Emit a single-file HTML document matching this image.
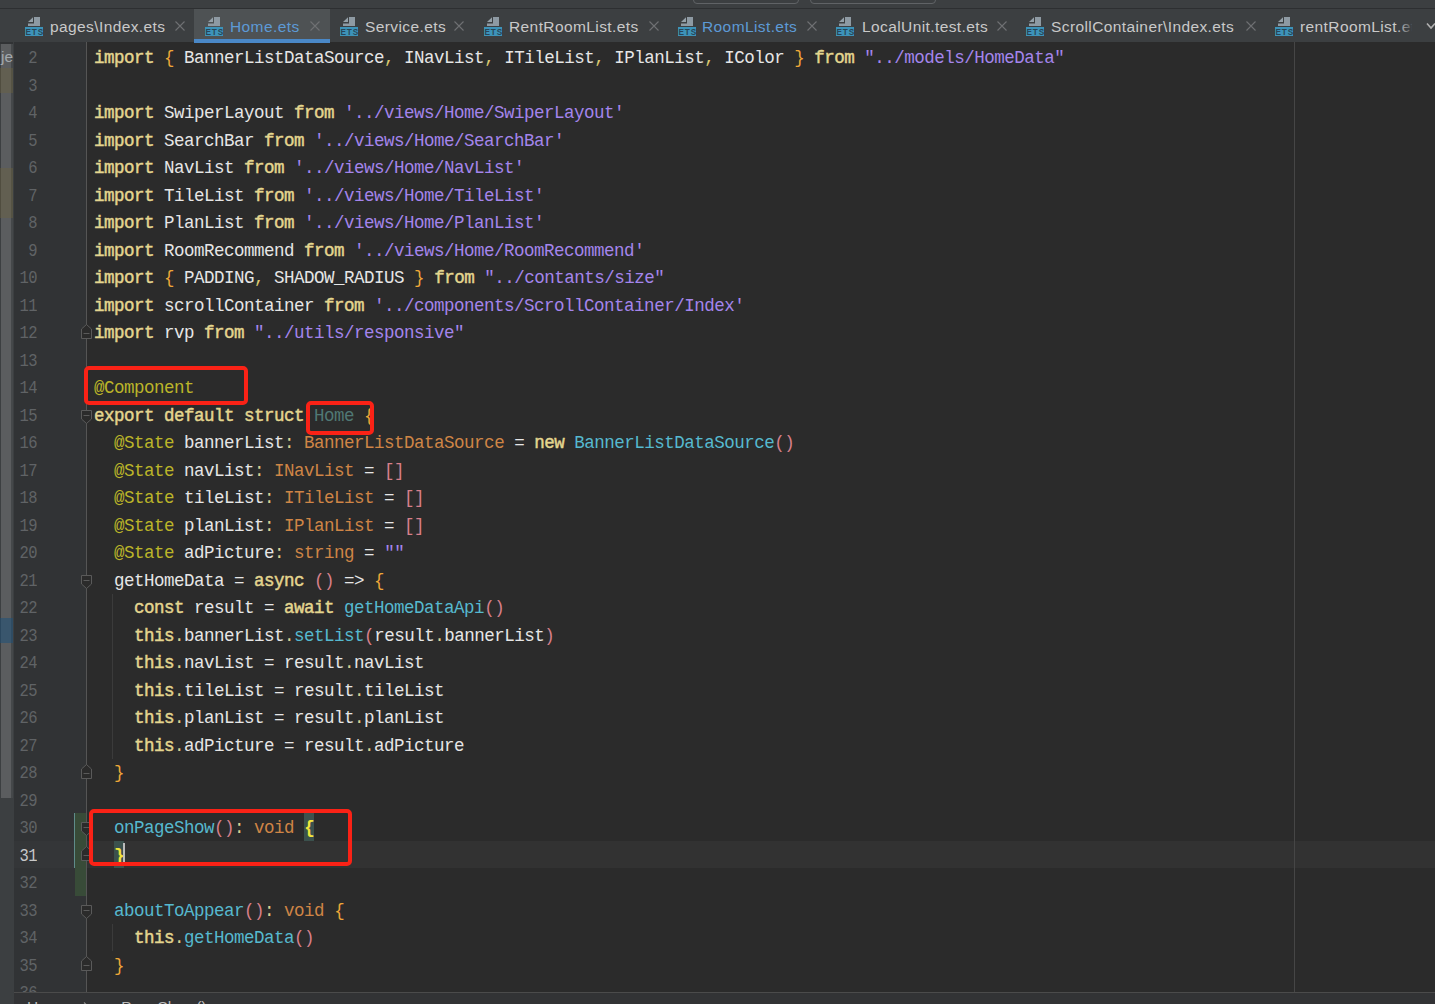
<!DOCTYPE html>
<html><head><meta charset="utf-8">
<style>
*{margin:0;padding:0;box-sizing:border-box}
html,body{width:1435px;height:1004px;overflow:hidden;background:#2b2b2b}
body{position:relative;font-family:"Liberation Sans",sans-serif}
#topbar{position:absolute;left:0;top:0;width:1435px;height:9px;background:#3c3f41;border-bottom:1px solid #2d2f31;overflow:hidden}
.tbtn{position:absolute;top:-10px;height:14px;border:1px solid #606366;border-radius:4px}
#tabs{position:absolute;left:0;top:9px;width:1435px;height:33px;background:#3c3f41}
#acttab{position:absolute;left:194px;top:9px;width:136px;height:33px;background:#4e5254}
#actline{position:absolute;left:194px;top:39px;width:136px;height:4px;z-index:2;background:#4a88c7}
.ico{position:absolute;top:17px}
.tt{position:absolute;top:16px;font-size:15.5px;letter-spacing:0.4px;line-height:22px;color:#c9c9c9;white-space:pre}
.tt.bl{color:#5d9ad6}
.x{position:absolute;top:21px}
#fade{position:absolute;left:1397px;top:9px;width:27px;height:30px;background:linear-gradient(to right,rgba(60,63,65,0) 0,rgba(60,63,65,0.75) 14px,#3c3f41 15px)}
#chev{position:absolute;left:1426px;top:22px}
#editor{position:absolute;left:0;top:42px;width:1435px;height:950px;overflow:hidden}
#editor .in{position:absolute;left:0;top:-42px;width:1435px;height:1004px}
#lstrip{position:absolute;left:0;top:42px;width:14px;height:950px;background:#3c3f41}
#lstripline{position:absolute;left:0;top:42px;width:13px;height:2px;background:#313335}
#thumb{position:absolute;left:1px;top:44px;width:10px;height:754px;background:#5b5d5f}
#lsep{position:absolute;left:11px;top:44px;width:2px;height:754px;background:#45484a}
.band{position:absolute;left:0;width:13px}
#je{position:absolute;left:1px;top:47px;font-size:15.5px;line-height:20px;color:#a3a9ad}
#gutter{position:absolute;left:14px;top:42px;width:73px;height:950px;background:#313335}
#gcur{position:absolute;left:14px;top:841px;width:61px;height:27px;background:#343638}
#change{position:absolute;left:75px;top:813px;width:11px;height:83px;background:#384b38}
#changeline{position:absolute;left:74px;top:813px;width:1px;height:55px;background:#5f8c8a}
.ln{position:absolute;left:3px;width:34px;height:0;text-align:right;transform:scaleX(0.86);transform-origin:34px 0;font-family:"Liberation Mono",monospace;font-size:18px;letter-spacing:-0.6px;line-height:0;color:#606366}
.ln.cur{color:#c8c8c8}
.cl{position:absolute;left:94px;height:0;font-family:"Liberation Mono",monospace;font-size:17.5px;letter-spacing:-0.5px;line-height:0;white-space:pre;color:#e6e6e6}
.k{color:#e4d68f;font-weight:normal;-webkit-text-stroke:0.45px #e4d68f}
.w{color:#e6e6e6}
.b{color:#eea738}
.s{color:#a485ec}
.a{color:#bbb529}
.nm{color:#507874}
.y{color:#cf8546}
.d{color:#dcd08e}
.cm{color:#d9c76e}
.c{color:#56b9cf}
.p{color:#d77f8a}
.m{color:#f0e43c;font-weight:bold}
.bh{position:absolute;width:10px;height:27.5px;background:#3b514d}
#foldline{position:absolute;left:86px;top:42px;width:1px;height:950px;background:#555}
#curline{position:absolute;left:87px;top:840.5px;width:1348px;height:27.5px;background:#323232}
#margin{position:absolute;left:1294px;top:42px;width:1px;height:950px;background:#464646}
.guide{position:absolute;width:1px;background:#3b3b3b}
.fold{position:absolute;left:81px}
#caret{position:absolute;left:123px;top:843px;width:2px;height:19px;background:#bbbbbb}
#bread{position:absolute;left:0;top:992px;width:1435px;height:12px;background:#323335;border-top:1px solid #4b4b4b;overflow:hidden}
#breadl{position:absolute;left:0;top:992px;width:14px;height:12px;background:#3c3f41}
.bt{position:absolute;top:1px;font-size:15.5px;line-height:20px;color:#bbbbbb;white-space:pre}
.redbox{position:absolute;border:4px solid #fa2216;border-radius:5px}
</style></head><body>
<div id="topbar">
  <div class="tbtn" style="left:693px;width:106px"></div>
  <div class="tbtn" style="left:810px;width:126px"></div>
</div>
<div id="tabs"></div>
<div id="acttab"></div>
<div id="actline"></div>
<svg class="ico" style="left:25px" width="18" height="19" viewBox="0 0 18 19"><path d="M3 5L8 0.2V5Z" fill="#94a0a8"/><path d="M9 0H15V9H3V6.5H9Z" fill="#8e9aa3"/><rect x="0" y="10" width="18" height="9" fill="#3d93b9"/><text x="9.7" y="17.6" text-anchor="middle" font-family="Liberation Sans" font-weight="bold" font-size="8.2" letter-spacing="0.9" fill="#284658">ETS</text></svg>
<div class="tt nt" style="left:50px">pages\Index.ets</div>
<svg class="x" style="left:175px" width="10" height="10" viewBox="0 0 10 10"><path d="M0.5 0.5L9.5 9.5M9.5 0.5L0.5 9.5" stroke="#6f7173" stroke-width="1.1"/></svg>
<svg class="ico" style="left:205px" width="18" height="19" viewBox="0 0 18 19"><path d="M3 5L8 0.2V5Z" fill="#94a0a8"/><path d="M9 0H15V9H3V6.5H9Z" fill="#8e9aa3"/><rect x="0" y="10" width="18" height="9" fill="#3d93b9"/><text x="9.7" y="17.6" text-anchor="middle" font-family="Liberation Sans" font-weight="bold" font-size="8.2" letter-spacing="0.9" fill="#284658">ETS</text></svg>
<div class="tt bl" style="left:230px">Home.ets</div>
<svg class="x" style="left:310px" width="10" height="10" viewBox="0 0 10 10"><path d="M0.5 0.5L9.5 9.5M9.5 0.5L0.5 9.5" stroke="#6f7173" stroke-width="1.1"/></svg>
<svg class="ico" style="left:340px" width="18" height="19" viewBox="0 0 18 19"><path d="M3 5L8 0.2V5Z" fill="#94a0a8"/><path d="M9 0H15V9H3V6.5H9Z" fill="#8e9aa3"/><rect x="0" y="10" width="18" height="9" fill="#3d93b9"/><text x="9.7" y="17.6" text-anchor="middle" font-family="Liberation Sans" font-weight="bold" font-size="8.2" letter-spacing="0.9" fill="#284658">ETS</text></svg>
<div class="tt nt" style="left:365px">Service.ets</div>
<svg class="x" style="left:454px" width="10" height="10" viewBox="0 0 10 10"><path d="M0.5 0.5L9.5 9.5M9.5 0.5L0.5 9.5" stroke="#6f7173" stroke-width="1.1"/></svg>
<svg class="ico" style="left:484px" width="18" height="19" viewBox="0 0 18 19"><path d="M3 5L8 0.2V5Z" fill="#94a0a8"/><path d="M9 0H15V9H3V6.5H9Z" fill="#8e9aa3"/><rect x="0" y="10" width="18" height="9" fill="#3d93b9"/><text x="9.7" y="17.6" text-anchor="middle" font-family="Liberation Sans" font-weight="bold" font-size="8.2" letter-spacing="0.9" fill="#284658">ETS</text></svg>
<div class="tt nt" style="left:509px">RentRoomList.ets</div>
<svg class="x" style="left:649px" width="10" height="10" viewBox="0 0 10 10"><path d="M0.5 0.5L9.5 9.5M9.5 0.5L0.5 9.5" stroke="#6f7173" stroke-width="1.1"/></svg>
<svg class="ico" style="left:678px" width="18" height="19" viewBox="0 0 18 19"><path d="M3 5L8 0.2V5Z" fill="#94a0a8"/><path d="M9 0H15V9H3V6.5H9Z" fill="#8e9aa3"/><rect x="0" y="10" width="18" height="9" fill="#3d93b9"/><text x="9.7" y="17.6" text-anchor="middle" font-family="Liberation Sans" font-weight="bold" font-size="8.2" letter-spacing="0.9" fill="#284658">ETS</text></svg>
<div class="tt bl" style="left:702px">RoomList.ets</div>
<svg class="x" style="left:807px" width="10" height="10" viewBox="0 0 10 10"><path d="M0.5 0.5L9.5 9.5M9.5 0.5L0.5 9.5" stroke="#6f7173" stroke-width="1.1"/></svg>
<svg class="ico" style="left:836px" width="18" height="19" viewBox="0 0 18 19"><path d="M3 5L8 0.2V5Z" fill="#94a0a8"/><path d="M9 0H15V9H3V6.5H9Z" fill="#8e9aa3"/><rect x="0" y="10" width="18" height="9" fill="#3d93b9"/><text x="9.7" y="17.6" text-anchor="middle" font-family="Liberation Sans" font-weight="bold" font-size="8.2" letter-spacing="0.9" fill="#284658">ETS</text></svg>
<div class="tt nt" style="left:862px">LocalUnit.test.ets</div>
<svg class="x" style="left:997px" width="10" height="10" viewBox="0 0 10 10"><path d="M0.5 0.5L9.5 9.5M9.5 0.5L0.5 9.5" stroke="#6f7173" stroke-width="1.1"/></svg>
<svg class="ico" style="left:1026px" width="18" height="19" viewBox="0 0 18 19"><path d="M3 5L8 0.2V5Z" fill="#94a0a8"/><path d="M9 0H15V9H3V6.5H9Z" fill="#8e9aa3"/><rect x="0" y="10" width="18" height="9" fill="#3d93b9"/><text x="9.7" y="17.6" text-anchor="middle" font-family="Liberation Sans" font-weight="bold" font-size="8.2" letter-spacing="0.9" fill="#284658">ETS</text></svg>
<div class="tt nt" style="left:1051px">ScrollContainer\Index.ets</div>
<svg class="x" style="left:1246px" width="10" height="10" viewBox="0 0 10 10"><path d="M0.5 0.5L9.5 9.5M9.5 0.5L0.5 9.5" stroke="#6f7173" stroke-width="1.1"/></svg>
<svg class="ico" style="left:1275px" width="18" height="19" viewBox="0 0 18 19"><path d="M3 5L8 0.2V5Z" fill="#94a0a8"/><path d="M9 0H15V9H3V6.5H9Z" fill="#8e9aa3"/><rect x="0" y="10" width="18" height="9" fill="#3d93b9"/><text x="9.7" y="17.6" text-anchor="middle" font-family="Liberation Sans" font-weight="bold" font-size="8.2" letter-spacing="0.9" fill="#284658">ETS</text></svg>
<div class="tt nt" style="left:1300px">rentRoomList.ets</div>
<div id="fade"></div>
<svg id="chev" width="10" height="8" viewBox="0 0 10 8"><path d="M1 1.5L5 6L9 1.5" stroke="#b0b0b0" stroke-width="1.6" fill="none"/></svg>
<div id="editor"><div class="in">
<div id="lstrip"></div>
<div id="thumb"></div>
<div id="lsep"></div>
<div class="band" style="top:68px;height:25px;background:rgba(110,100,60,0.4)"></div>
<div class="band" style="top:168px;height:50px;background:rgba(110,100,60,0.4)"></div>
<div class="band" style="top:618px;height:25px;background:rgba(30,80,120,0.55)"></div>
<div id="je">je</div>
<div id="lstripline"></div>
<div id="gutter"></div>
<div id="gcur"></div>
<div id="change"></div>
<div id="changeline"></div>
<div id="curline"></div>
<div class="bh" style="left:304px;top:813px"></div>
<div class="bh" style="left:114px;top:840.5px"></div>
<div id="margin"></div>
<div id="foldline"></div>
<div class="guide" style="left:112px;top:594px;height:165px"></div>
<div class="guide" style="left:112px;top:924px;height:27px"></div>
<svg class="fold" style="top:409.7px" width="11" height="15" viewBox="0 0 11 15"><path d="M0.5 0.5H10.5V9L5.5 13.5L0.5 9Z" fill="#2b2b2b" stroke="#5a5a5a" stroke-width="1"/><path d="M2.5 5.5H8.5" stroke="#5a5a5a" stroke-width="1"/></svg>
<svg class="fold" style="top:574.7px" width="11" height="15" viewBox="0 0 11 15"><path d="M0.5 0.5H10.5V9L5.5 13.5L0.5 9Z" fill="#2b2b2b" stroke="#5a5a5a" stroke-width="1"/><path d="M2.5 5.5H8.5" stroke="#5a5a5a" stroke-width="1"/></svg>
<svg class="fold" style="top:822.2px" width="11" height="15" viewBox="0 0 11 15"><path d="M0.5 0.5H10.5V9L5.5 13.5L0.5 9Z" fill="#2b2b2b" stroke="#5a5a5a" stroke-width="1"/><path d="M2.5 5.5H8.5" stroke="#5a5a5a" stroke-width="1"/></svg>
<svg class="fold" style="top:904.7px" width="11" height="15" viewBox="0 0 11 15"><path d="M0.5 0.5H10.5V9L5.5 13.5L0.5 9Z" fill="#2b2b2b" stroke="#5a5a5a" stroke-width="1"/><path d="M2.5 5.5H8.5" stroke="#5a5a5a" stroke-width="1"/></svg>
<svg class="fold" style="top:323.5px" width="11" height="15" viewBox="0 0 11 15"><path d="M0.5 14.5H10.5V5L5.5 0.5L0.5 5Z" fill="#2b2b2b" stroke="#5a5a5a" stroke-width="1"/><path d="M2.5 9.5H8.5" stroke="#5a5a5a" stroke-width="1"/></svg>
<svg class="fold" style="top:763.5px" width="11" height="15" viewBox="0 0 11 15"><path d="M0.5 14.5H10.5V5L5.5 0.5L0.5 5Z" fill="#2b2b2b" stroke="#5a5a5a" stroke-width="1"/><path d="M2.5 9.5H8.5" stroke="#5a5a5a" stroke-width="1"/></svg>
<svg class="fold" style="top:846.0px" width="11" height="15" viewBox="0 0 11 15"><path d="M0.5 14.5H10.5V5L5.5 0.5L0.5 5Z" fill="#2b2b2b" stroke="#5a5a5a" stroke-width="1"/><path d="M2.5 9.5H8.5" stroke="#5a5a5a" stroke-width="1"/></svg>
<svg class="fold" style="top:956.0px" width="11" height="15" viewBox="0 0 11 15"><path d="M0.5 14.5H10.5V5L5.5 0.5L0.5 5Z" fill="#2b2b2b" stroke="#5a5a5a" stroke-width="1"/><path d="M2.5 9.5H8.5" stroke="#5a5a5a" stroke-width="1"/></svg>
<div class="ln" style="top:30.50px">1</div>
<div class="ln" style="top:58.00px">2</div>
<div class="ln" style="top:85.50px">3</div>
<div class="ln" style="top:113.00px">4</div>
<div class="ln" style="top:140.50px">5</div>
<div class="ln" style="top:168.00px">6</div>
<div class="ln" style="top:195.50px">7</div>
<div class="ln" style="top:223.00px">8</div>
<div class="ln" style="top:250.50px">9</div>
<div class="ln" style="top:278.00px">10</div>
<div class="ln" style="top:305.50px">11</div>
<div class="ln" style="top:333.00px">12</div>
<div class="ln" style="top:360.50px">13</div>
<div class="ln" style="top:388.00px">14</div>
<div class="ln" style="top:415.50px">15</div>
<div class="ln" style="top:443.00px">16</div>
<div class="ln" style="top:470.50px">17</div>
<div class="ln" style="top:498.00px">18</div>
<div class="ln" style="top:525.50px">19</div>
<div class="ln" style="top:553.00px">20</div>
<div class="ln" style="top:580.50px">21</div>
<div class="ln" style="top:608.00px">22</div>
<div class="ln" style="top:635.50px">23</div>
<div class="ln" style="top:663.00px">24</div>
<div class="ln" style="top:690.50px">25</div>
<div class="ln" style="top:718.00px">26</div>
<div class="ln" style="top:745.50px">27</div>
<div class="ln" style="top:773.00px">28</div>
<div class="ln" style="top:800.50px">29</div>
<div class="ln" style="top:828.00px">30</div>
<div class="ln cur" style="top:855.50px">31</div>
<div class="ln" style="top:883.00px">32</div>
<div class="ln" style="top:910.50px">33</div>
<div class="ln" style="top:938.00px">34</div>
<div class="ln" style="top:965.50px">35</div>
<div class="ln" style="top:993.00px">36</div>
<div class="cl" style="top:58.00px"><span class="k">import</span> <span class="b">{</span><span class="w"> BannerListDataSource<span class="cm">,</span> INavList<span class="cm">,</span> ITileList<span class="cm">,</span> IPlanList<span class="cm">,</span> IColor </span><span class="b">}</span> <span class="k">from</span> <span class="s">&quot;../models/HomeData&quot;</span></div>
<div class="cl" style="top:85.50px"></div>
<div class="cl" style="top:113.00px"><span class="k">import</span><span class="w"> SwiperLayout </span><span class="k">from</span> <span class="s">&#x27;../views/Home/SwiperLayout&#x27;</span></div>
<div class="cl" style="top:140.50px"><span class="k">import</span><span class="w"> SearchBar </span><span class="k">from</span> <span class="s">&#x27;../views/Home/SearchBar&#x27;</span></div>
<div class="cl" style="top:168.00px"><span class="k">import</span><span class="w"> NavList </span><span class="k">from</span> <span class="s">&#x27;../views/Home/NavList&#x27;</span></div>
<div class="cl" style="top:195.50px"><span class="k">import</span><span class="w"> TileList </span><span class="k">from</span> <span class="s">&#x27;../views/Home/TileList&#x27;</span></div>
<div class="cl" style="top:223.00px"><span class="k">import</span><span class="w"> PlanList </span><span class="k">from</span> <span class="s">&#x27;../views/Home/PlanList&#x27;</span></div>
<div class="cl" style="top:250.50px"><span class="k">import</span><span class="w"> RoomRecommend </span><span class="k">from</span> <span class="s">&#x27;../views/Home/RoomRecommend&#x27;</span></div>
<div class="cl" style="top:278.00px"><span class="k">import</span> <span class="b">{</span><span class="w"> PADDING<span class="cm">,</span> SHADOW_RADIUS </span><span class="b">}</span> <span class="k">from</span> <span class="s">&quot;../contants/size&quot;</span></div>
<div class="cl" style="top:305.50px"><span class="k">import</span><span class="w"> scrollContainer </span><span class="k">from</span> <span class="s">&#x27;../components/ScrollContainer/Index&#x27;</span></div>
<div class="cl" style="top:333.00px"><span class="k">import</span><span class="w"> rvp </span><span class="k">from</span> <span class="s">&quot;../utils/responsive&quot;</span></div>
<div class="cl" style="top:360.50px"></div>
<div class="cl" style="top:388.00px"><span class="a">@Component</span></div>
<div class="cl" style="top:415.50px"><span class="k">export default struct</span> <span class="nm">Home</span> <span class="b">{</span></div>
<div class="cl" style="top:443.00px">  <span class="a">@State</span><span class="w"> bannerList<span class="d">:</span> </span><span class="y">BannerListDataSource</span><span class="w"> = </span><span class="k">new</span> <span class="c">BannerListDataSource</span><span class="p">()</span></div>
<div class="cl" style="top:470.50px">  <span class="a">@State</span><span class="w"> navList<span class="d">:</span> </span><span class="y">INavList</span><span class="w"> = </span><span class="p">[]</span></div>
<div class="cl" style="top:498.00px">  <span class="a">@State</span><span class="w"> tileList<span class="d">:</span> </span><span class="y">ITileList</span><span class="w"> = </span><span class="p">[]</span></div>
<div class="cl" style="top:525.50px">  <span class="a">@State</span><span class="w"> planList<span class="d">:</span> </span><span class="y">IPlanList</span><span class="w"> = </span><span class="p">[]</span></div>
<div class="cl" style="top:553.00px">  <span class="a">@State</span><span class="w"> adPicture<span class="d">:</span> </span><span class="y">string</span><span class="w"> = </span><span class="s">&quot;&quot;</span></div>
<div class="cl" style="top:580.50px">  <span class="w">getHomeData = </span><span class="k">async</span> <span class="p">()</span><span class="w"> =&gt; </span><span class="b">{</span></div>
<div class="cl" style="top:608.00px">    <span class="k">const</span><span class="w"> result = </span><span class="k">await</span> <span class="c">getHomeDataApi</span><span class="p">()</span></div>
<div class="cl" style="top:635.50px">    <span class="k">this</span><span class="w"><span class="d">.</span>bannerList<span class="d">.</span></span><span class="c">setList</span><span class="p">(</span><span class="w">result<span class="d">.</span>bannerList</span><span class="p">)</span></div>
<div class="cl" style="top:663.00px">    <span class="k">this</span><span class="w"><span class="d">.</span>navList = result<span class="d">.</span>navList</span></div>
<div class="cl" style="top:690.50px">    <span class="k">this</span><span class="w"><span class="d">.</span>tileList = result<span class="d">.</span>tileList</span></div>
<div class="cl" style="top:718.00px">    <span class="k">this</span><span class="w"><span class="d">.</span>planList = result<span class="d">.</span>planList</span></div>
<div class="cl" style="top:745.50px">    <span class="k">this</span><span class="w"><span class="d">.</span>adPicture = result<span class="d">.</span>adPicture</span></div>
<div class="cl" style="top:773.00px">  <span class="b">}</span></div>
<div class="cl" style="top:800.50px"></div>
<div class="cl" style="top:828.00px">  <span class="c">onPageShow</span><span class="p">()</span><span class="w"><span class="d">:</span> </span><span class="y">void</span> <span class="m">{</span></div>
<div class="cl" style="top:855.50px">  <span class="m">}</span></div>
<div class="cl" style="top:883.00px"></div>
<div class="cl" style="top:910.50px">  <span class="c">aboutToAppear</span><span class="p">()</span><span class="w"><span class="d">:</span> </span><span class="y">void</span> <span class="b">{</span></div>
<div class="cl" style="top:938.00px">    <span class="k">this</span><span class="w"><span class="d">.</span></span><span class="c">getHomeData</span><span class="p">()</span></div>
<div class="cl" style="top:965.50px">  <span class="b">}</span></div>
<div id="caret"></div>
</div></div>
<div id="bread"></div>
<div id="breadl"></div>
<div class="bt" style="left:27px;top:997px">Home</div>
<div class="bt" style="left:104px;top:997px">onPageShow()</div>
<svg style="position:absolute;left:82px;top:1002px" width="9" height="10" viewBox="0 0 9 10"><path d="M2 0.5L6.5 5L2 9.5" stroke="#8a8a8a" stroke-width="1.2" fill="none"/></svg>
<div class="redbox" style="left:84px;top:366px;width:164px;height:39px"></div>
<div class="redbox" style="left:306px;top:401px;width:68px;height:34px"></div>
<div class="redbox" style="left:89px;top:809px;width:263px;height:57px"></div>
</body></html>
